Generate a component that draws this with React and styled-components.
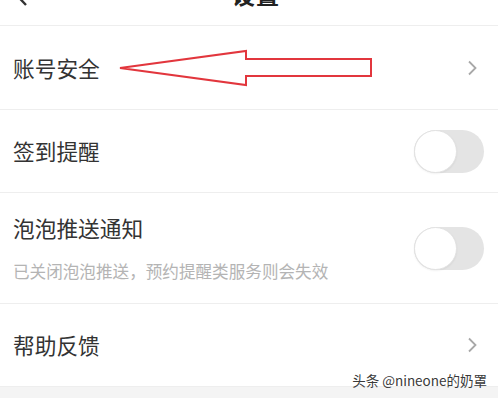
import React from 'react'
import styled, { createGlobalStyle } from 'styled-components'

const GlobalStyle = createGlobalStyle`
  html, body {
    margin: 0;
    padding: 0;
    background: #fff;
    overflow: hidden;
  }
  body {
    font-family: "Noto Sans CJK SC", "Noto Sans", sans-serif;
    color: #333;
  }
`

const Page = styled.div`
  position: relative;
  width: 498px;
  height: 398px;
  overflow: hidden;
  display: flex;
  flex-direction: column;
`

const Header = styled.div`
  display: grid;
  grid-template-columns: 1fr auto 1fr;
  align-items: end;
  height: 57px;
  margin-top: -31px;
  padding: 0 0 19px 14px;
  box-sizing: border-box;
  border-bottom: 1px solid #eeeeee;
  flex-shrink: 0;
`

const BackIcon = styled.svg`
  width: 14px;
  height: 22px;
  margin-bottom: -1px;
  display: block;
`

const Title = styled.div`
  font-size: 23px;
  line-height: 23px;
  font-weight: 700;
  color: #222;
  letter-spacing: 1px;
`

const Row = styled.div`
  position: relative;
  display: flex;
  align-items: center;
  justify-content: space-between;
  height: ${({ $h }) => $h}px;
  padding: 0 15px 0 13px;
  box-sizing: border-box;
  border-bottom: 1px solid #eeeeee;
  flex-shrink: 0;
`

const TextCol = styled.div`
  display: flex;
  flex-direction: column;
`

const Label = styled.div`
  font-size: 21.7px;
  line-height: 30px;
  color: #333;
`

const Hint = styled.div`
  margin-top: 16px;
  font-size: 16.6px;
  line-height: 24px;
  color: #b4b4b4;
`

const Chevron = styled.svg`
  width: 12px;
  height: 16px;
  margin-right: 5px;
  display: block;
`

const Toggle = styled.div`
  position: relative;
  width: 70px;
  height: 43px;
  border-radius: 22px;
  background: #e4e4e4;
  margin-right: -1px;
`

const Knob = styled.div`
  position: absolute;
  left: 0;
  top: 0;
  width: 43px;
  height: 43px;
  border-radius: 50%;
  background: #fff;
  box-sizing: border-box;
  border: 1px solid #e2e2e2;
  box-shadow: 0 1px 2px rgba(0, 0, 0, 0.06);
`

const ArrowMark = styled.svg`
  position: absolute;
  left: 118px;
  top: 23px;
  width: 256px;
  height: 38px;
  overflow: visible;
`

const Footer = styled.div`
  flex: 1;
  background: #f4f4f4;
`

const Watermark = styled.div`
  position: absolute;
  right: 11px;
  bottom: 10px;
  font-size: 13.5px;
  line-height: 16px;
  color: #3a3a3a;
  font-family: "Noto Sans CJK SC", "Liberation Sans", sans-serif;
`

function RightChevron() {
  return (
    <Chevron viewBox="0 0 12 16">
      <path d="M3 1.5 L9.5 8 L3 14.5" fill="none" stroke="#a8a8a8" strokeWidth="1.8" />
    </Chevron>
  )
}

function Switch() {
  return (
    <Toggle>
      <Knob />
    </Toggle>
  )
}

export default function App() {
  return (
    <>
      <GlobalStyle />
      <Page>
        <Header>
          <BackIcon viewBox="0 0 14 22">
            <path d="M12 1 L3 10.5 L12 20" fill="none" stroke="#333" strokeWidth="2.4" />
          </BackIcon>
          <Title>设置</Title>
          <div />
        </Header>

        <Row $h={84}>
          <Label>账号安全</Label>
          <RightChevron />
          <ArrowMark viewBox="0 0 256 38">
            <polygon
              points="2,19 128,2 128,10 253,10 253,27 128,27 128,36"
              fill="none"
              stroke="#e2363d"
              strokeWidth="2"
              strokeLinejoin="miter"
            />
          </ArrowMark>
        </Row>

        <Row $h={83}>
          <Label>签到提醒</Label>
          <Switch />
        </Row>

        <Row $h={111}>
          <TextCol>
            <Label>泡泡推送通知</Label>
            <Hint>已关闭泡泡推送，预约提醒类服务则会失效</Hint>
          </TextCol>
          <Switch />
        </Row>

        <Row $h={83}>
          <Label>帮助反馈</Label>
          <RightChevron />
        </Row>

        <Footer />
        <Watermark>头条 @nineone的奶罩</Watermark>
      </Page>
    </>
  )
}
